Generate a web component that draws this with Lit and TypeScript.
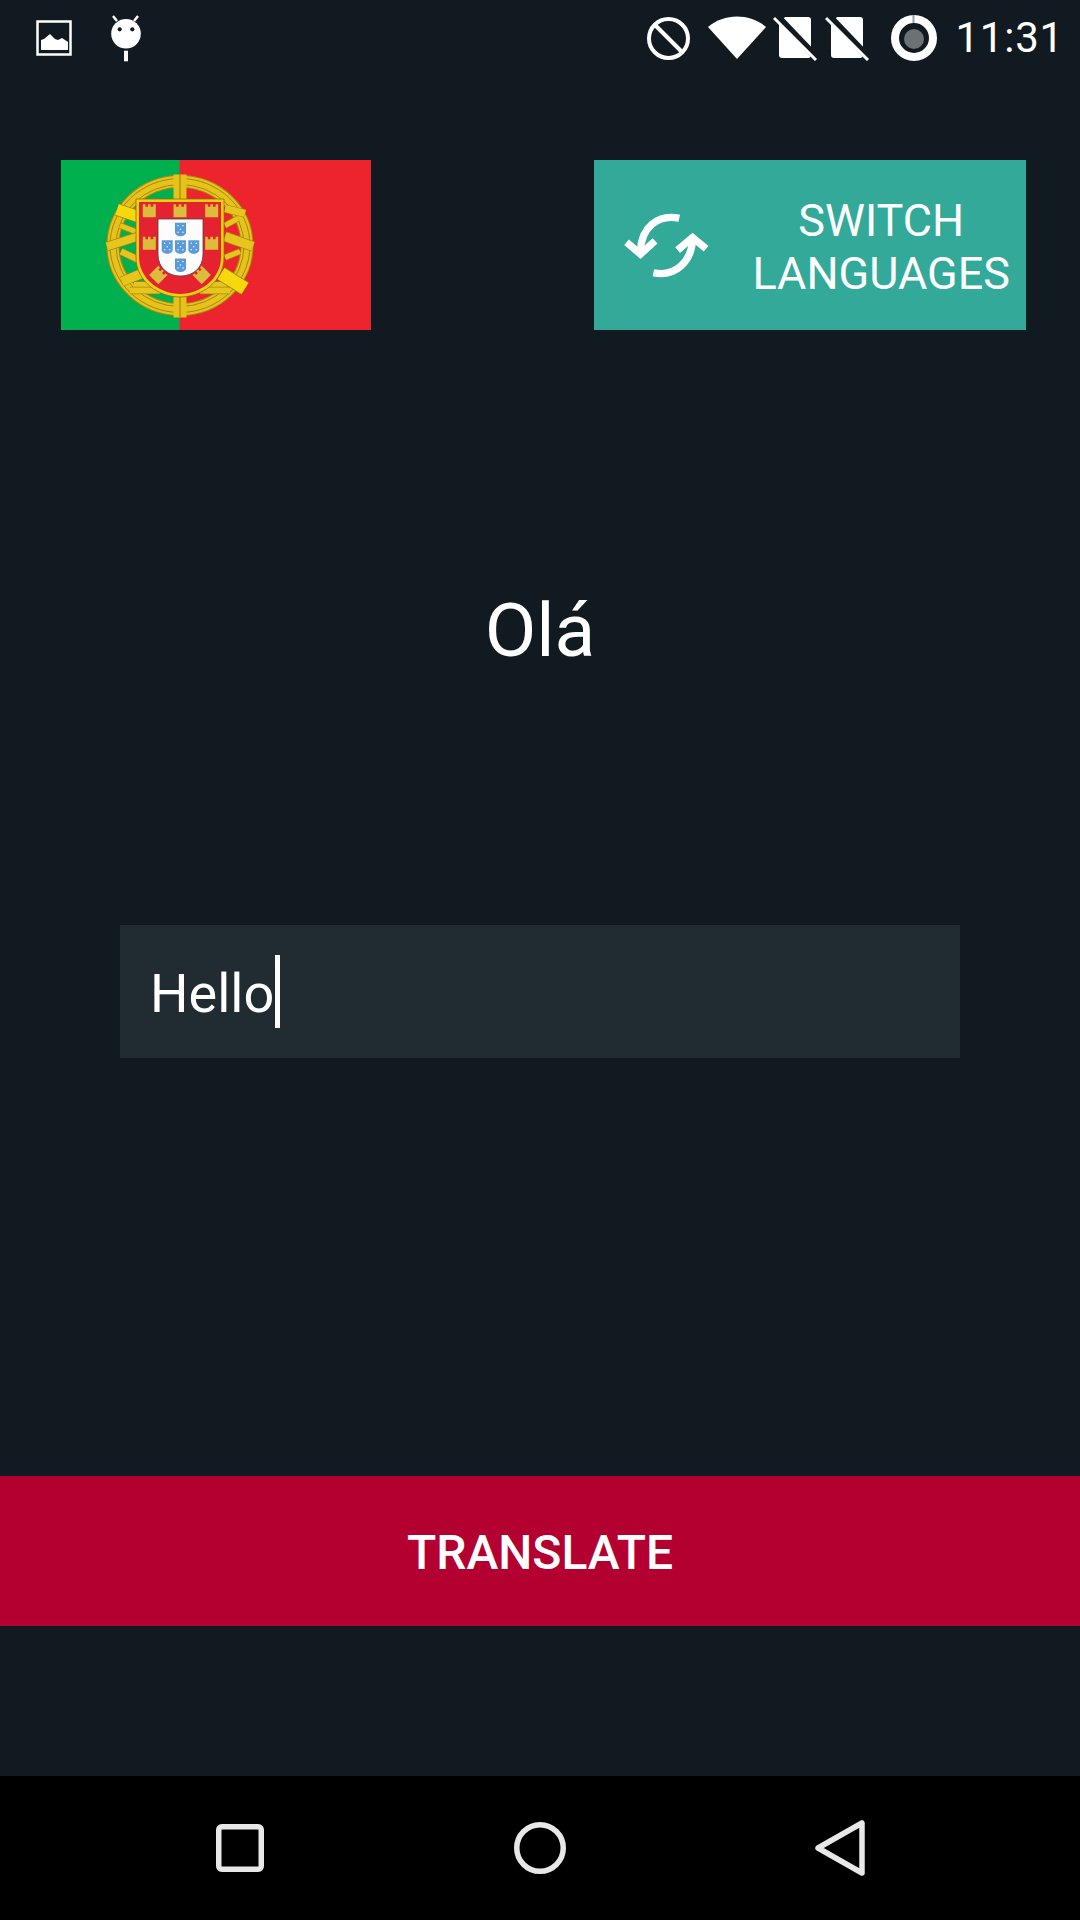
import { LitElement, html, css, svg } from "lit";
import { customElement } from "lit/decorators.js";

const castles: [number, number, number][] = [
  [49.3, 50.7, 0], [80, 50.7, 0], [111.7, 50.7, 0], [49.3, 83.3, 0], [111.7, 83.3, 0], [58.3, 115, 45], [101.7, 115, -45],
];
const quinas: [number, number][] = [[80, 69.3], [66.7, 86.7], [80, 86.7], [93.3, 86.7], [80, 105]];

// crest coordinates are flag px, drawn around the sphere's centre: x1, y1, x2, y2, width, bright
const bars: [number, number, number, number, number, boolean][] = [
  [-60, -20, -42, -13, 5, false],
  [-59, 6, -42, 14, 6, false],
  [-73, 1, -42, -9, 8, false],
  [-58, 36, -38, 28, 9, false],
  [45, -37, 65, -32, 7, false],
  [45, -20, 58, -27, 5, false],
  [45, -9, 73, 1, 9, false],
  [45, 12, 60, 6, 5, false],
  [-46, 39.5, 46, 39.5, 6, false],
  [-50, 45, -20, 45, 6, false],
  [20, 45, 50, 45, 6, false],
  [-63, -36, -42, -29, 11, true],
  [41, 28, 65, 43, 13, true],
];

function crest() {
  return svg`
    <g transform="translate(119 85.5)">
      <ellipse rx="67" ry="64" class="ring-edge" stroke-width="13"></ellipse>
      <ellipse rx="67" ry="64" class="ring" stroke-width="11"></ellipse>
      <ellipse rx="70" ry="67" class="ring-edge" stroke-width="1"></ellipse>
      <ellipse rx="64" ry="61" class="ring-edge" stroke-width="1"></ellipse>
      ${bars.map(
        ([a, b, c, d, w, bright]) => svg`
          <line x1=${a} y1=${b} x2=${c} y2=${d} class="bar-edge" stroke-width=${w + 1.5}></line>
          <line x1=${a} y1=${b} x2=${c} y2=${d} class=${bright ? "bar-bright" : "bar"} stroke-width=${w}></line>`
      )}
      <rect x="-6.5" y="-71" width="13" height="143" class="band"></rect>
      <line x1="0" y1="-71" x2="0" y2="72" class="bar-edge" stroke-width="1.2"></line>
    </g>
    <g transform="translate(39 0)">
      <path d="M36 39H124V97C124 122 101 137 80 137S36 122 36 97Z" class="shield-outer"></path>
      <path d="M39 42H121V97C121 119 100 134 80 134S39 119 39 97Z" class="shield-red"></path>
      ${castles.map(
        ([x, y, r]) => svg`
        <g transform="translate(${x} ${y}) rotate(${r})">
          <path d="M-6.5-6.5h2.600v2.500h2.600v-2.500h2.600v2.500h2.600v-2.500h2.600V6.500H-6.5Z" class="castle"></path>
        </g>`
      )}
      <path d="M58 59H103V94C103 108 93 116 80.5 116S58 108 58 94Z" class="shield-white"></path>
      ${quinas.map(
        ([x, y]) => svg`
        <g transform="translate(${x + 0.5} ${y})">
          <path d="M-5.5-6.5H5.500V3C5.500 5.500 2.500 7 0 7S-5.500 5.500-5.500 3Z" class="quina"></path>
          <g class="dots">
            <circle cx="-2.5" cy="-3.5" r=".8"></circle><circle cx="2.5" cy="-3.5" r=".8"></circle>
            <circle cx="0" cy="0" r=".8"></circle>
            <circle cx="-2.5" cy="3" r=".8"></circle><circle cx="2.5" cy="3" r=".8"></circle>
          </g>
        </g>`
      )}
    </g>`;
}

const sim = svg`
  <path d="M12 2H35a3 3 0 0 1 3 3V40a3 3 0 0 1-3 3H9a3 3 0 0 1-3-3V9Z" fill="#fff"></path>
  <path d="M2-1L44 43" stroke="#121a21" stroke-width="7"></path>
  <path d="M1 3L43 45" stroke="#fff" stroke-width="3"></path>`;

@customElement("app-root")
export class AppRoot extends LitElement {
  static styles = css`
    :host {
      display: block;
      width: 1080px;
      height: 1920px;
      overflow: hidden;
      font-family: Roboto, "Liberation Sans", sans-serif;
      color: #fff;
      background: #121a21;
    }
    .page {
      display: flex;
      flex-direction: column;
      height: 1920px;
    }
    svg {
      display: block;
      flex: none;
    }
    .status {
      display: flex;
      justify-content: space-between;
      align-items: flex-start;
      height: 76px;
      flex: none;
    }
    .status-left {
      display: flex;
      padding: 14px 0 0 30px;
      gap: 27px;
    }
    .status-right {
      display: flex;
      align-items: center;
      height: 76px;
      padding-right: 16px;
    }
    .wifi { margin-left: 18px; }
    .sim-a { margin-left: 7px; }
    .sim-b { margin-left: 6px; }
    .battery { margin-left: 20px; }
    .time {
      font-size: 42px;
      line-height: 76px;
      letter-spacing: 0.8px;
      margin-left: 18px;
    }
    .top {
      display: flex;
      justify-content: space-between;
      margin-top: 84px;
      padding: 0 54px 0 61px;
      height: 170px;
      flex: none;
    }
    .flag {
      width: 310px;
      height: 170px;
    }
    .switch {
      width: 432px;
      height: 170px;
      background: #33a99a;
      display: flex;
      align-items: center;
      justify-content: space-between;
      padding: 0 16px 0 28px;
      box-sizing: border-box;
    }
    .switch-label {
      text-align: center;
      font-size: 45px;
      line-height: 53px;
      padding-top: 4px;
    }
    .result {
      flex: none;
      height: 595px;
      box-sizing: border-box;
      padding-top: 4px;
      display: flex;
      align-items: center;
      justify-content: center;
      font-size: 75px;
    }
    .input {
      flex: none;
      height: 133px;
      margin: 0 120px;
      background: #202c32;
      display: flex;
      align-items: center;
      padding-left: 30px;
      font-size: 54px;
    }
    .input-text {
      padding-top: 4px;
    }
    .caret {
      width: 5px;
      height: 73px;
      background: #fff;
      margin-left: 1px;
    }
    .translate {
      flex: none;
      height: 150px;
      box-sizing: border-box;
      padding-top: 2px;
      margin-top: 418px;
      background: #b40030;
      display: flex;
      align-items: center;
      justify-content: center;
      font-size: 48px;
      font-weight: 500;
    }
    .nav {
      flex: none;
      margin-top: 150px;
      height: 144px;
      background: #000;
      display: grid;
      grid-template-columns: repeat(3, 300px);
      justify-content: center;
      align-items: center;
      justify-items: center;
    }
    .nav svg * {
      fill: none;
      stroke: #e8e8e8;
      stroke-width: 5.5;
      stroke-linejoin: round;
    }
    .ring, .ring-edge { fill: none; }
    .ring { stroke: #e6c21a; }
    .ring-edge { stroke: #a58a14; }
    .bar { stroke: #e8c51c; }
    .bar-bright { stroke: #f7d80c; }
    .bar-edge { stroke: #a58a14; }
    .band { fill: #e6c21a; }
    .shield-outer { fill: #f3cf12; stroke: #8c6f10; stroke-width: 0.8; }
    .shield-red { fill: #e52230; }
    .castle { fill: #dcbc3a; }
    .shield-white { fill: #fcfcfc; stroke: #5a3a3a; stroke-width: 0.8; }
    .quina { fill: #5a9ad8; }
    .dots { fill: #e8f1fb; }
    .blurred { filter: blur(0.6px); }
  `;

  render() {
    return html`
      <div class="page">
        <div class="status">
          <div class="status-left">
            <svg width="45" height="45" viewBox="0 0 45 45">
              <rect x="7.5" y="7.5" width="33" height="33" fill="none" stroke="#fff" stroke-width="2.5"></rect>
              <path d="M11 36V26l3-1 6-5 5 5 3 1 4-2 3 2 3 2v8Z" fill="#fff"></path>
            </svg>
            <svg width="48" height="52" viewBox="0 0 48 52">
              <circle cx="24" cy="19.7" r="14.8" fill="#fff"></circle>
              <path d="M11 2l4 5M36 2l-4 5" stroke="#fff" stroke-width="2.5" fill="none"></path>
              <circle cx="17.7" cy="15.3" r="2.1" fill="#121a21"></circle>
              <circle cx="30.3" cy="15.3" r="2.1" fill="#121a21"></circle>
              <rect x="22" y="36.7" width="4" height="10.6" fill="#fff"></rect>
            </svg>
          </div>
          <div class="status-right">
            <svg width="43" height="43" viewBox="0 0 43 43">
              <circle cx="21.5" cy="21.5" r="19.5" fill="none" stroke="#fff" stroke-width="4"></circle>
              <path d="M7 7l29 29" stroke="#fff" stroke-width="4"></path>
            </svg>
            <svg class="wifi" width="58" height="44" viewBox="0 0 58 44">
              <path d="M0 11C16-3 42-3 58 11L29 43Z" fill="#fff"></path>
            </svg>
            <svg class="sim-a" width="46" height="46" viewBox="0 0 46 46">${sim}</svg>
            <svg class="sim-b" width="46" height="46" viewBox="0 0 46 46">${sim}</svg>
            <svg class="battery" width="46" height="46" viewBox="0 0 46 46">
              <circle cx="23" cy="23" r="19" fill="none" stroke="#fff" stroke-width="8"></circle>
              <circle cx="23" cy="24" r="10" fill="#6b7175"></circle>
              <rect x="21.5" y="0" width="2" height="8" fill="#9aa0a3"></rect>
            </svg>
            <span class="time">11:31</span>
          </div>
        </div>

        <div class="top">
          <svg class="flag" viewBox="0 0 310 170">
            <rect width="119" height="170" fill="#00b04f"></rect>
            <rect x="118.5" width="191.5" height="170" fill="#ed232e"></rect>
            <g class="blurred">${crest()}</g>
          </svg>
          <div class="switch">
            <svg width="90" height="68" viewBox="110 180 270 205">
              <g fill="none" stroke="#fff" stroke-width="22">
                <path d="M282 202C215 188 168 232 165 300"></path>
                <path d="M123 274L165 310L209 270"></path>
                <path d="M204 366C270 380 320 332 322 264"></path>
                <path d="M277 298L322 260L363 294"></path>
              </g>
            </svg>
            <div class="switch-label">SWITCH<br />LANGUAGES</div>
          </div>
        </div>

        <div class="result">Olá</div>

        <div class="input"><span class="input-text">Hello</span><span class="caret"></span></div>

        <div class="translate">TRANSLATE</div>

        <div class="nav">
          <svg width="48" height="48" viewBox="0 0 48 48"><rect x="2.75" y="2.75" width="42.5" height="42.5" rx="3"></rect></svg>
          <svg width="52" height="52" viewBox="0 0 52 52"><circle cx="26" cy="26" r="23.25"></circle></svg>
          <svg width="50" height="56" viewBox="0 0 50 56"><path d="M3 28L47 3V53Z"></path></svg>
        </div>
      </div>
    `;
  }
}
